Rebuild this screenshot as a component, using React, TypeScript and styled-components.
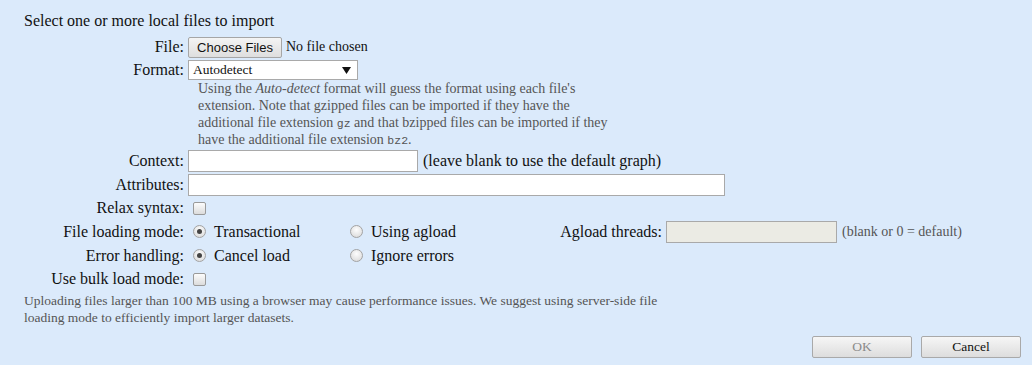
import React from "react"
import styled, { createGlobalStyle } from "styled-components"

const GlobalStyle = createGlobalStyle`
  html, body {
    margin: 0;
    padding: 0;
    background: #dbeafb;
  }
  body {
    font-family: "Liberation Serif", "Times New Roman", serif;
    color: #111;
  }
`

const Page = styled.div`
  width: 1032px;
  height: 365px;
  box-sizing: border-box;
  padding: 11px 11px 0 24px;
  background: #dbeafb;
`

const Heading = styled.div`
  font-size: 16px;
  line-height: 20px;
  margin-bottom: 5px;
`

const Row = styled.div<{ $h?: number; $mt?: number }>`
  display: flex;
  align-items: center;
  height: ${(p) => p.$h ?? 23}px;
  margin-top: ${(p) => p.$mt ?? 0}px;
  font-size: 16px;
`

const Label = styled.div`
  width: 160px;
  flex-shrink: 0;
  text-align: right;
  padding-right: 4px;
  white-space: nowrap;
`

const FileButton = styled.button`
  height: 21px;
  width: 94px;
  padding: 0;
  font-family: Arial, "Liberation Sans", sans-serif;
  font-size: 13px;
  color: #111;
  background: linear-gradient(#f4f4f4, #dedede);
  border: 1px solid #a6a6a6;
  border-radius: 2px;
`

const NoFile = styled.span`
  font-size: 14px;
  margin-left: 4px;
`

const SelectBox = styled.div`
  width: 170px;
  height: 20px;
  box-sizing: border-box;
  background: #fff;
  border: 1px solid #a9a9a9;
  display: flex;
  align-items: center;
  justify-content: space-between;
  padding: 0 6px 0 4px;
  font-size: 13.5px;
`

const Help = styled.div`
  margin-left: 174px;
  width: 428px;
  height: 68px;
  font-size: 14px;
  line-height: 17px;
  color: #555;
  margin-top: -1px;
  margin-bottom: 1px;
`

const Code = styled.code`
  font-family: "Liberation Mono", "DejaVu Sans Mono", monospace;
  font-size: 11.5px;
  line-height: 0;
`

const TextInput = styled.input<{ $w: number; $disabled?: boolean }>`
  width: ${(p) => p.$w}px;
  height: 22px;
  box-sizing: border-box;
  margin: 0;
  border: 1px solid #a9a9a9;
  background: ${(p) => (p.$disabled ? "#ebebe4" : "#fff")};
  padding: 1px 2px;
  font-size: 13px;
`

const Hint = styled.span<{ $size?: number; $color?: string }>`
  margin-left: 5px;
  font-size: ${(p) => p.$size ?? 16}px;
  color: ${(p) => p.$color ?? "#111"};
  white-space: nowrap;
`

const Check = styled.span`
  display: inline-block;
  width: 11px;
  height: 11px;
  margin-left: 5px;
  border: 1px solid #9a9a9a;
  border-radius: 2px;
  background: linear-gradient(#fcfcfc, #dcdcdc);
`

const Option = styled.div<{ $w: number }>`
  display: flex;
  align-items: center;
  width: ${(p) => p.$w}px;
  flex-shrink: 0;
  white-space: nowrap;
`

const Radio = styled.span<{ $on?: boolean }>`
  position: relative;
  display: inline-block;
  width: 11px;
  height: 11px;
  margin: 0 8px 0 5px;
  border: 1px solid #a3a3a3;
  border-radius: 50%;
  background: radial-gradient(circle at 50% 35%, #fdfdfd, #d6d6d6);
  &::after {
    content: "";
    display: ${(p) => (p.$on ? "block" : "none")};
    position: absolute;
    left: 3px;
    top: 3px;
    width: 5px;
    height: 5px;
    border-radius: 50%;
    background: #444;
  }
`

const ThreadsLabel = styled.span`
  width: 197px;
  text-align: right;
  padding-right: 4px;
  flex-shrink: 0;
`

const Note = styled.div`
  margin-top: 2px;
  width: 672px;
  font-size: 13.5px;
  line-height: 17px;
  color: #555;
`

const Footer = styled.div`
  display: flex;
  justify-content: flex-end;
  gap: 9px;
  margin-top: 10px;
`

const DialogButton = styled.button<{ $disabled?: boolean }>`
  width: 100px;
  height: 22px;
  padding: 0;
  font-family: "Liberation Serif", "Times New Roman", serif;
  font-size: 13.5px;
  color: ${(p) => (p.$disabled ? "#8a8a8a" : "#111")};
  background: linear-gradient(#f6f6f6, #dddddd);
  border: 1px solid #a9a9a9;
  border-radius: 2px;
`

const Arrow = () => (
  <svg width="9" height="7" viewBox="0 0 9 7">
    <path d="M0 0 L9 0 L4.5 7 Z" fill="#111" />
  </svg>
)

export default function App() {
  return (
    <Page>
      <GlobalStyle />
      <Heading>Select one or more local files to import</Heading>

      <Row $h={22}>
        <Label>File:</Label>
        <FileButton type="button">Choose Files</FileButton>
        <NoFile>No file chosen</NoFile>
      </Row>

      <Row $h={22} $mt={1}>
        <Label>Format:</Label>
        <SelectBox>
          <span>Autodetect</span>
          <Arrow />
        </SelectBox>
      </Row>

      <Help>
        Using the <i>Auto-detect</i> format will guess the format using each file's extension.
        Note that gzipped files can be imported if they have the additional file extension{" "}
        <Code>gz</Code> and that bzipped files can be imported if they have the additional file
        extension <Code>bz2</Code>.
      </Help>

      <Row $h={23}>
        <Label>Context:</Label>
        <TextInput $w={230} />
        <Hint>(leave blank to use the default graph)</Hint>
      </Row>

      <Row $h={23} $mt={1}>
        <Label>Attributes:</Label>
        <TextInput $w={537} />
      </Row>

      <Row $h={24}>
        <Label>Relax syntax:</Label>
        <Check />
      </Row>

      <Row $h={23}>
        <Label>File loading mode:</Label>
        <Option $w={157}>
          <Radio $on />
          Transactional
        </Option>
        <Option $w={120}>
          <Radio />
          Using agload
        </Option>
        <ThreadsLabel>Agload threads:</ThreadsLabel>
        <TextInput $w={171} $disabled />
        <Hint $size={14} $color="#555">
          (blank or 0 = default)
        </Hint>
      </Row>

      <Row $h={25}>
        <Label>Error handling:</Label>
        <Option $w={157}>
          <Radio $on />
          Cancel load
        </Option>
        <Option $w={120}>
          <Radio />
          Ignore errors
        </Option>
      </Row>

      <Row $h={22}>
        <Label>Use bulk load mode:</Label>
        <Check />
      </Row>

      <Note>
        Uploading files larger than 100 MB using a browser may cause performance issues. We suggest
        using server-side file loading mode to efficiently import larger datasets.
      </Note>

      <Footer>
        <DialogButton type="button" $disabled>
          OK
        </DialogButton>
        <DialogButton type="button">Cancel</DialogButton>
      </Footer>
    </Page>
  )
}
